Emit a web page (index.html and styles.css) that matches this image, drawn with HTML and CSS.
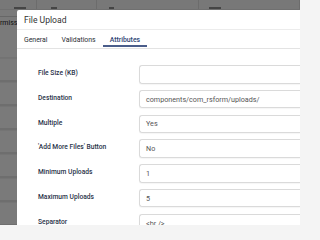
FILE: index.html
```html
<!DOCTYPE html>
<html>
<head>
<meta charset="utf-8">
<link rel="stylesheet" href="styles.css">
</head>
<body>
<div class="page">
  <div class="toolbar">
    <div class="tbtn tb1"><span class="mark m1"></span></div>
    <div class="tbtn tb2"><span class="mark m2"></span></div>
    <div class="tbtn tb3"><span class="mark m3"></span></div>
    <div class="tbtn tb4"><span class="mark m4"></span></div>
  </div>
  <div class="head-row"><span class="perm">rmiss</span></div>
  <div class="filter"></div>
  <div class="trow"></div>
  <div class="trow"></div>
  <div class="trow"></div>
  <div class="trow"></div>
  <div class="trow"></div>
  <div class="trow"></div>
  <div class="trow"></div>
  <div class="backdrop"></div>
  <div class="modal">
    <div class="modal-header">File Upload</div>
    <div class="tabs">
      <div class="tab">General</div>
      <div class="tab">Validations</div>
      <div class="tab active">Attributes</div>
    </div>
    <div class="modal-body">
      <div class="row"><div class="label">File Size (KB)</div><div class="input"></div></div>
      <div class="row"><div class="label">Destination</div><div class="input">components/com_rsform/uploads/</div></div>
      <div class="row"><div class="label">Multiple</div><div class="input">Yes</div></div>
      <div class="row"><div class="label">'Add More Files' Button</div><div class="input">No</div></div>
      <div class="row"><div class="label">Minimum Uploads</div><div class="input">1</div></div>
      <div class="row"><div class="label">Maximum Uploads</div><div class="input">5</div></div>
      <div class="row"><div class="label">Separator</div><div class="input">&lt;br /&gt;</div></div>
    </div>
  </div>
</div>
</body>
</html>
```
FILE: styles.css
```css
html, body {
  margin: 0;
  padding: 0;
  width: 300px;
  height: 225px;
  overflow: hidden;
  font-family: Roboto, "Liberation Sans", sans-serif;
}
body {
  background: #f4f4f4;
}
.page {
  position: relative;
  width: 300px;
  height: 225px;
  overflow: hidden;
}
.toolbar {
  display: flex;
  height: 9px;
  background: #f0f0f0;
  border-bottom: 1px solid #e0e0e0;
  overflow: hidden;
}
.tbtn {
  border-right: 1px solid #d8d8d8;
  box-sizing: border-box;
  height: 9px;
  position: relative;
}
.tb1 { width: 37px; }
.tb2 { width: 60px; }
.tb3 { width: 102px; }
.tb4 { width: 101px; }
.mark {
  position: absolute;
  bottom: 0;
  height: 2px;
  background: #8a8a8a;
}
.m1 { left: 14px; width: 12px; }
.m2 { left: 14px; width: 6px; }
.m3 { left: 12px; width: 5px; }
.m4 { left: 10px; width: 12px; }
.head-row {
  height: 6px;
  border-bottom: 1px solid #cfcfcf;
  white-space: nowrap;
}
.perm {
  display: inline-block;
  margin-top: 1px;
  font-size: 7px;
  line-height: 7px;
  color: #222;
}
.filter {
  height: 40px;
  border-bottom: 1px solid #e6e6e6;
}
.trow {
  height: 21px;
  border-bottom: 2px solid #dcdcdc;
  border-top: 1px solid #e8e8e8;
}
.backdrop {
  position: absolute;
  left: 0;
  top: 0;
  width: 300px;
  height: 225px;
  background: rgba(0, 0, 0, 0.5);
}
.modal {
  position: absolute;
  left: 17px;
  top: 10px;
  width: 283px;
  height: 215px;
  overflow: hidden;
  background: #fff;
  border-radius: 2px 0 0 0;
}
.modal-header {
  height: 19px;
  padding-left: 7px;
  display: flex;
  align-items: center;
  border-bottom: 1px solid #ececec;
  font-size: 8.6px;
  color: #333;
}
.tabs {
  display: flex;
  box-sizing: border-box;
  height: 19px;
  border-bottom: 1px solid #e3e3e3;
}
.tab {
  padding: 4px 7px 0;
  display: flex;
  align-items: center;
  font-size: 6.9px;
  color: #2b2f36;
  border-bottom: 2px solid transparent;
  margin-bottom: 1px;
}
.tab.active {
  color: #2f4573;
  font-weight: 500;
  border-bottom-color: #4a5d8a;
}
.modal-body {
  padding: 16px 0 0 21px;
  display: flex;
  flex-direction: column;
  gap: 6.3px;
}
.row {
  display: flex;
  align-items: flex-start;
}
.label {
  width: 101px;
  flex: none;
  padding-top: 3px;
  line-height: 10px;
  font-size: 6.7px;
  font-weight: 500;
  color: #2a3349;
  white-space: nowrap;
}
.input {
  flex: 1;
  height: 18.5px;
  box-sizing: border-box;
  border: 1px solid #dadada;
  border-right: none;
  border-radius: 3px 0 0 3px;
  padding-left: 6px;
  display: flex;
  align-items: center;
  font-size: 7.2px;
  color: #555;
  box-shadow: 0 1px 1px rgba(0,0,0,0.04);
}
```
